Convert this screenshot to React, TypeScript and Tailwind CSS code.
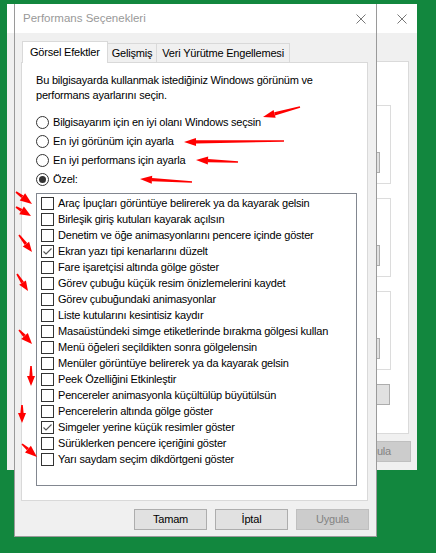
import React from "react";

const items = [
  { label: "Araç İpuçları görüntüye belirerek ya da kayarak gelsin", checked: false },
  { label: "Birleşik giriş kutuları kayarak açılsın", checked: false },
  { label: "Denetim ve öğe animasyonlarını pencere içinde göster", checked: false },
  { label: "Ekran yazı tipi kenarlarını düzelt", checked: true },
  { label: "Fare işaretçisi altında gölge göster", checked: false },
  { label: "Görev çubuğu küçük resim önizlemelerini kaydet", checked: false },
  { label: "Görev çubuğundaki animasyonlar", checked: false },
  { label: "Liste kutularını kesintisiz kaydır", checked: false },
  { label: "Masaüstündeki simge etiketlerinde bırakma gölgesi kullan", checked: false },
  { label: "Menü öğeleri seçildikten sonra gölgelensin", checked: false },
  { label: "Menüler görüntüye belirerek ya da kayarak gelsin", checked: false },
  { label: "Peek Özelliğini Etkinleştir", checked: false },
  { label: "Pencereler animasyonla küçültülüp büyütülsün", checked: false },
  { label: "Pencerelerin altında gölge göster", checked: false },
  { label: "Simgeler yerine küçük resimler göster", checked: true },
  { label: "Sürüklerken pencere içeriğini göster", checked: false },
  { label: "Yarı saydam seçim dikdörtgeni göster", checked: false },
];

const radios = [
  { label: "Bilgisayarım için en iyi olanı Windows seçsin", checked: false },
  { label: "En iyi görünüm için ayarla", checked: false },
  { label: "En iyi performans için ayarla", checked: false },
  { label: "Özel:", checked: true },
];

// red annotation arrows: tail -> tip
const arrows = [
  { x1: 300, y1: 107, x2: 263, y2: 117, head: 12, w: 8 },
  { x1: 284, y1: 141, x2: 184, y2: 142, head: 12, w: 8 },
  { x1: 238, y1: 162, x2: 196, y2: 160, head: 12, w: 8 },
  { x1: 192, y1: 182, x2: 140, y2: 179, head: 12, w: 8 },
  { x1: 16, y1: 192, x2: 32, y2: 204, head: 12, w: 9 },
  { x1: 16, y1: 207, x2: 31, y2: 216, head: 11, w: 9 },
  { x1: 19, y1: 235, x2: 32, y2: 252, head: 10, w: 8 },
  { x1: 17, y1: 274, x2: 28, y2: 291, head: 10, w: 8 },
  { x1: 19, y1: 330, x2: 32, y2: 344, head: 11, w: 9 },
  { x1: 31, y1: 366, x2: 31, y2: 386, head: 10, w: 8 },
  { x1: 22, y1: 405, x2: 22, y2: 423, head: 10, w: 8 },
  { x1: 22, y1: 444, x2: 37, y2: 457, head: 12, w: 9 },
];

function arrowPolys(a: (typeof arrows)[number]) {
  const dx = a.x2 - a.x1;
  const dy = a.y2 - a.y1;
  const len = Math.hypot(dx, dy);
  const ux = dx / len;
  const uy = dy / len;
  const nx = -uy;
  const ny = ux;
  const bx = a.x2 - ux * a.head;
  const by = a.y2 - uy * a.head;
  const t0 = 0.8;
  const t1 = 1.6;
  const shaft = [
    [a.x1 + nx * t0, a.y1 + ny * t0],
    [bx + nx * t1, by + ny * t1],
    [bx - nx * t1, by - ny * t1],
    [a.x1 - nx * t0, a.y1 - ny * t0],
  ];
  const head = [
    [bx + (nx * a.w) / 2, by + (ny * a.w) / 2],
    [a.x2, a.y2],
    [bx - (nx * a.w) / 2, by - (ny * a.w) / 2],
  ];
  const s = (p: number[][]) => p.map((q) => q.join(",")).join(" ");
  return { shaft: s(shaft), head: s(head) };
}

function CloseIcon() {
  return (
    <svg width="10" height="10" viewBox="0 0 10 10" className="text-[#777]">
      <path d="M0.5 0.5 L9.5 9.5 M9.5 0.5 L0.5 9.5" stroke="currentColor" strokeWidth="1" fill="none" />
    </svg>
  );
}

function WinButton({ label, disabled }: { label: string; disabled?: boolean }) {
  return (
    <div
      className={
        "w-[73px] h-[21px] flex items-center justify-center border " +
        (disabled
          ? "bg-[#cccccc] border-[#bfbfbf] text-[#838383]"
          : "bg-[#e1e1e1] border-[#adadad] text-black")
      }
    >
      {label}
    </div>
  );
}

function Radio({ label, checked }: { label: string; checked: boolean }) {
  return (
    <div className="h-[19px] flex items-center gap-[4px]">
      <div className="w-[13px] h-[13px] rounded-full border border-[#333] bg-white flex items-center justify-center">
        {checked && <div className="w-[7px] h-[7px] rounded-full bg-[#333]" />}
      </div>
      <span>{label}</span>
    </div>
  );
}

function Check({ label, checked }: { label: string; checked: boolean }) {
  return (
    <div className="h-[16px] flex items-center gap-[4px] pl-[4px] whitespace-nowrap">
      <div className="w-[13px] h-[13px] border border-[#333] bg-white shrink-0 flex items-center justify-center">
        {checked && (
          <svg width="11" height="11" viewBox="0 0 11 11">
            <polyline points="1.5,5.5 4,8 9.5,2.5" fill="none" stroke="#555" strokeWidth="1.1" />
          </svg>
        )}
      </div>
      <span>{label}</span>
    </div>
  );
}

export default function App() {
  return (
    <div className="relative w-[436px] h-[553px] overflow-hidden bg-[#12873e] font-['Liberation_Sans',Arial,sans-serif] text-[11px] tracking-[-0.2px] text-black">
      {/* Arka pencere */}
      <div className="absolute left-[7px] top-[4px] w-[410px] h-[466px] bg-[#f0f0f0] flex flex-col">
        <div className="h-[29px] bg-white flex items-center justify-end pr-[10px] shrink-0">
          <CloseIcon />
        </div>
        <div className="flex-1 flex flex-col">
          <div className="mt-[28px] ml-[14px] mr-[8px] h-[373px] bg-white border border-[#dadada] flex flex-col items-end pr-[17px] pt-[43px]">
            {[0, 1, 2].map((i) => (
              <div
                key={i}
                className="w-[280px] h-[79px] mb-[14px] border border-[#dcdcdc] flex items-end justify-end pr-[10px] pb-[10px]"
              >
                <div className="w-[60px] h-[21px] bg-[#e1e1e1] border border-[#adadad]" />
              </div>
            ))}
            <div className="mr-[1px] w-[60px] h-[21px] bg-[#e1e1e1] border border-[#adadad]" />
          </div>
          <div className="flex justify-end mt-[7px] mr-[6px]">
            <WinButton label="Uygula" disabled />
          </div>
        </div>
      </div>

      {/* Performans Seçenekleri */}
      <div className="absolute left-[14px] top-[4px] w-[363px] h-[533px] bg-[#f0f0f0] border-x border-b border-[#9a9a9a] flex flex-col">
        <div className="h-[29px] bg-white flex items-center justify-between pl-[8px] pr-[10px] shrink-0">
          <span className="text-[11.5px] tracking-normal text-[#999]">Performans Seçenekleri</span>
          <CloseIcon />
        </div>

        <div className="mt-[7px] ml-[6px] mr-[8px] flex flex-col">
          <div className="flex items-end h-[22px] relative z-10">
            <div className="ml-[1px] h-[22px] px-[7px] bg-white border border-b-0 border-[#d9d9d9] flex items-center -mb-px pb-px">
              Görsel Efektler
            </div>
            <div className="h-[19px] px-[4px] border border-l-0 border-b-0 border-[#d9d9d9] flex items-center">
              Gelişmiş
            </div>
            <div className="h-[19px] px-[5px] border border-l-0 border-b-0 border-[#d9d9d9] flex items-center">
              Veri Yürütme Engellemesi
            </div>
          </div>

          <div className="h-[439px] bg-white border border-[#d9d9d9] pl-[14px] pr-[10px] pt-[10px]">
            <p className="leading-[15px] whitespace-nowrap">
              Bu bilgisayarda kullanmak istediğiniz Windows görünüm ve
              <br />
              performans ayarlarını seçin.
            </p>
            <div className="mt-[10px] flex flex-col">
              {radios.map((r) => (
                <Radio key={r.label} label={r.label} checked={r.checked} />
              ))}
            </div>
            <div className="mt-[4px] h-[293px] border border-[#828790] pt-px overflow-hidden">
              {items.map((it) => (
                <Check key={it.label} label={it.label} checked={it.checked} />
              ))}
            </div>
          </div>
        </div>

        <div className="mt-[8px] mr-[7px] flex justify-end gap-[8px]">
          <WinButton label="Tamam" />
          <WinButton label="İptal" />
          <WinButton label="Uygula" disabled />
        </div>
      </div>

      {/* Kırmızı oklar */}
      <svg className="absolute inset-0 pointer-events-none" width="436" height="553" viewBox="0 0 436 553">
        {arrows.map((a, i) => {
          const p = arrowPolys(a);
          return (
            <g key={i} fill="#ff0000">
              <polygon points={p.shaft} />
              <polygon points={p.head} />
            </g>
          );
        })}
      </svg>
    </div>
  );
}
